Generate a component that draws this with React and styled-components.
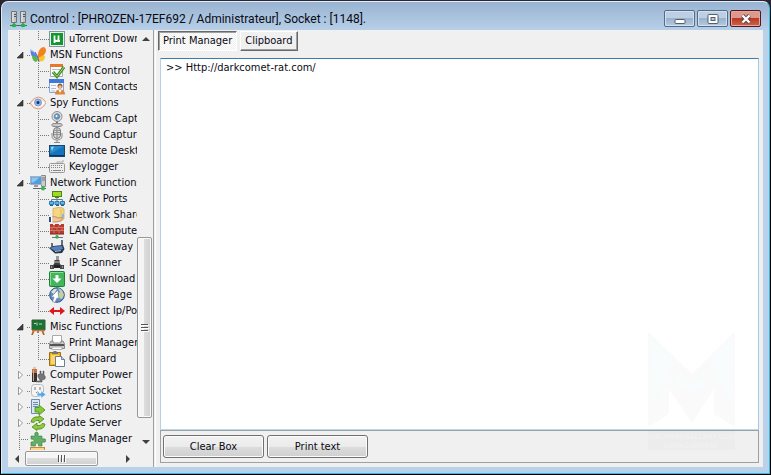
import React, { useState } from "react";
import styled, { createGlobalStyle, css } from "styled-components";

const GlobalStyle = createGlobalStyle`
  *, *::before, *::after { box-sizing: border-box; }
  body { margin: 0; background: #05060a; }
  body, button, textarea {
    font-family: "DejaVu Sans Condensed", "Noto Sans", sans-serif;
    font-size: 11px;
    line-height: 16px;
    color: #0a0a14;
  }
  button { padding: 0; cursor: default; }
  ul { list-style: none; margin: 0; padding: 0; }
  svg { display: block; }
`;

const Desktop = styled.div`
  height: 100vh;
  padding: 1px;
  background: linear-gradient(#2a2836, #000 30px);
`;

const Window = styled.main`
  position: relative;
  display: flex;
  flex-direction: column;
  height: 100%;
  padding: 0 6px 6px;
  border: 1px solid #35b9d6;
  border-top-color: #e4eef8;
  border-left-color: #dcebf8;
  border-radius: 7px 7px 0 0;
  background: linear-gradient(#99b4d1, #b9d1ea 30px, #b9d1ea);
  overflow: hidden;
`;

const TitleBar = styled.header`
  display: flex;
  align-items: center;
  flex: none;
  height: 28px;
  padding: 6px 2px 0;
  gap: 3px;
`;

const Title = styled.h1`
  flex: 1;
  margin: 0;
  font-family: Roboto, "Open Sans", sans-serif;
  font-size: 12px;
  font-weight: 400;
  line-height: 16px;
  white-space: nowrap;
`;

const WindowButtons = styled.div`
  display: flex;
  gap: 2px;
  align-self: flex-start;
  padding-top: 2px;
`;

const WindowButton = styled.button`
  display: grid;
  place-items: center;
  width: 31px;
  height: 17px;
  border: 1px solid ${(p) => (p.$close ? "#5a1420" : "#566a85")};
  border-radius: 2px;
  box-shadow: inset 0 0 0 1px ${(p) => (p.$close ? "#e5a79c" : "#d3e1f0")};
  background: ${(p) =>
    p.$close
      ? "linear-gradient(#dc9a8c 0 45%, #b93a22 50%, #d0644a)"
      : "linear-gradient(#bccfe4 0 45%, #9ab2ce 50%, #b4cae2)"};
`;

const Body = styled.div`
  display: flex;
  flex: 1;
  min-height: 0;
  background: #f0f0f0;
`;

const Sidebar = styled.nav`
  display: grid;
  grid-template: minmax(0, 1fr) 17px / minmax(0, 1fr) 16px;
  flex: none;
  width: 146px;
  border-right: 1px solid #a0a0a0;
`;

const Tree = styled.ul`
  padding-top: 1px;
  overflow: hidden;
`;

const dots = "repeating-linear-gradient(#777 0 1px, transparent 1px 2px)";
const dashes = "repeating-linear-gradient(90deg, #777 0 1px, transparent 1px 2px)";

const Row = styled.li`
  display: flex;
  align-items: center;
  height: 16px;
  white-space: nowrap;
`;

const RootCell = styled.span`
  display: flex;
  align-items: center;
  flex: none;
  width: 22px;
  height: 16px;
  padding-left: 8px;
  background-repeat: no-repeat;
  ${(p) =>
    p.$kind === "expander" &&
    css`
      background-image: ${dashes};
      background-size: 4px 1px;
      background-position: 19px 8px;
    `}
  ${(p) =>
    p.$kind === "line" &&
    css`
      background-image: ${dots};
      background-size: 1px 16px;
      background-position: 11px 0;
    `}
  ${(p) =>
    p.$kind === "leaf" &&
    css`
      background-image: ${dots}, ${dashes};
      background-size: 1px 16px, 10px 1px;
      background-position: 11px 0, 11px 8px;
    `}
`;

const ChildCell = styled.span`
  flex: none;
  width: 19px;
  height: 16px;
  background-image: ${dots}, ${dashes};
  background-repeat: no-repeat;
  background-size: 1px ${(p) => (p.$last ? "8px" : "16px")}, 11px 1px;
  background-position: 8px 0, 8px 8px;
`;

const Expander = styled.button`
  width: 8px;
  height: 10px;
  border: 0;
  background: none;
`;

const IconSlot = styled.span`
  flex: none;
  width: 16px;
  height: 16px;
  margin-right: 4px;
`;

const ScrollTrack = styled.div`
  display: flex;
  flex-direction: ${(p) => (p.$horizontal ? "row" : "column")};
  grid-column: ${(p) => (p.$horizontal ? "1 / -1" : "auto")};
  background: #f0f0f0;
`;

const ScrollArrow = styled.button`
  display: grid;
  place-items: center;
  flex: none;
  width: 17px;
  height: 17px;
  border: 0;
  background: none;
`;

const Spacer = styled.span`
  flex: ${(p) => p.$grow};
`;

const ScrollThumb = styled.button`
  display: grid;
  place-items: center;
  flex: ${(p) => p.$grow};
  margin: ${(p) => (p.$horizontal ? "1px 0" : "0 1px 0 0")};
  border: 1px solid #979797;
  border-radius: 2px;
  box-shadow: inset 0 0 0 1px #fafafa;
  background: linear-gradient(${(p) => (p.$horizontal ? "180deg" : "90deg")}, #f5f5f5 0 45%, #dcdcdc 50%, #d0d0d0);
`;

const Content = styled.section`
  display: flex;
  flex-direction: column;
  flex: 1;
  min-width: 0;
  margin-left: 1px;
  padding: 1px 4px 4px 4px;
  border-left: 1px solid #fff;
`;

const Tabs = styled.div`
  display: flex;
  gap: 3px;
  flex: none;
  margin: 0 0 7px -2px;
`;

const Tab = styled.button`
  height: 20px;
  padding: 0 4px;
  border: 1px solid;
  ${(p) =>
    p.$active
      ? css`
          border-color: #696969 #fff #fff #696969;
          box-shadow: inset 1px 1px #a0a0a0;
          background: repeating-conic-gradient(#f0f0f0 0 25%, #fff 0 50%) 0 0 / 2px 2px;
        `
      : css`
          border-color: #fff #696969 #696969 #fff;
          box-shadow: inset -1px -1px #a0a0a0;
          background: #f0f0f0;
        `}
`;

const TextBox = styled.textarea`
  display: block;
  flex: 1;
  min-height: 0;
  width: 100%;
  margin: 0;
  padding: 1px 5px;
  border: 1px solid;
  border-color: #3d7bad #a4c9e3 #b7d9ed #b5cfe7;
  border-radius: 1px;
  outline: none;
  resize: none;
  background: #fff;
`;

const ActionBar = styled.div`
  display: flex;
  gap: 3px;
  flex: none;
  padding: 4px 2px;
  border: 1px solid #a0a0a0;
`;

const ActionButton = styled.button`
  width: 101px;
  height: 23px;
  border: 1px solid #707070;
  border-radius: 3px;
  box-shadow: inset 0 0 0 1px #fcfcfc;
  background: linear-gradient(#f2f2f2, #ebebeb 50%, #dddddd 50%, #cfcfcf);
`;

const Watermark = styled.div`
  position: absolute;
  right: 34px;
  bottom: 23px;
  width: 87px;
  pointer-events: none;
`;

const WatermarkText = styled.div`
  padding-top: 1px;
  margin-top: 2px;
  background: #ececec;
  color: #f1f1f1;
  font-family: "Liberation Sans", sans-serif;
  font-size: 7px;
  font-weight: 700;
  line-height: 9px;
  text-align: center;
  white-space: nowrap;
`;

const Svg = ({ children, w = 16, h = 16 }) => (
  <svg width={w} height={h} viewBox={`0 0 ${w} ${h}`} aria-hidden="true">
    {children}
  </svg>
);

const icons = {
  utorrent: (
    <>
      <rect x=".5" y=".5" width="15" height="15" fill="#e8f0ea" stroke="#8793a0" />
      <rect x="2" y="2" width="12" height="12" fill="#12962f" />
      <path d="M5.5 12V4.500M5.500 8.500q.3 1.500 2 1.500t2-1.500V4.500V9q0 1 1.500 1" stroke="#fff" strokeWidth="1.800" fill="none" />
    </>
  ),
  msn: (
    <>
      <path d="M7 10Q5 3 0 2q-.5 3 1.500 5Z" fill="#a9c7ee" />
      <path d="M8 11Q4 4 1 4q-1 4 2 6Z" fill="#5b7fe0" />
      <path d="M8 12Q5 8 2 9q0 5 4 6 2-1 2-3Z" fill="#57b947" />
      <path d="M8 12Q7 2 13 0q3 0 3 4-1 5-7 7Z" fill="#f58220" />
      <path d="M8 12q4-5 7-3 0 5-4 5.500-2 0-3-2.500Z" fill="#f9c62e" />
      <path d="M5 5q3 4 4 10" stroke="#5b4fa5" fill="none" />
    </>
  ),
  control: (
    <>
      <path d="M1.500 1.500h12v12h-12z" fill="#fff" stroke="#a9a9a9" />
      <path d="M1 1h13v3H1z" fill="#e8772e" />
      <path d="M3 6.500h8M3 9.500h3" stroke="#bbb" />
      <path d="m4 9 4 4.500L15 4" stroke="#3c8c26" strokeWidth="3" fill="none" />
      <path d="m4 9 4 4.500L15 4" stroke="#a2dc7e" strokeWidth="1" fill="none" />
    </>
  ),
  contacts: (
    <>
      <path d="M.5.5h14v13H.5z" fill="#f6f9ff" stroke="#86a5dc" />
      <path d="M0 0h15v4H0z" fill="#3e79dc" />
      <path d="M2 6.500h5M2 9.500h5M2 12h4" stroke="#b5bfd3" />
      <circle cx="11" cy="7" r="2.500" fill="#9a5a2c" />
      <circle cx="11" cy="8" r="1.700" fill="#f0bd90" />
      <path d="M6 15.500q0-5 5-5t5 5Z" fill="#df8639" />
      <path d="m9.500 11 1.500 3 1.500-3Z" fill="#fff" />
    </>
  ),
  eye: (
    <>
      <path d="M0 8q4-6 8.500-6T16 7.500Q13 14 8 14T0 8Z" fill="#f7e4d8" stroke="#d5a184" />
      <path d="M2 8q3-4 6-4t6.500 4Q12 12 8 12T2 8Z" fill="#fff" />
      <circle cx="8" cy="7.500" r="3.500" fill="#8fb2ea" stroke="#7b9bd5" />
      <circle cx="8" cy="7.500" r="1.500" fill="#1c3160" />
    </>
  ),
  webcam: (
    <>
      <path d="M7 10h2v4H7z" fill="#777" />
      <ellipse cx="8" cy="14" rx="5.500" ry="1.700" fill="#ccc" stroke="#858585" />
      <circle cx="8" cy="5.500" r="5" fill="#ddd" stroke="#8e8e8e" />
      <circle cx="8" cy="5.500" r="2.700" fill="#5b9fda" stroke="#6d8299" />
      <circle cx="7.500" cy="5" r="1" fill="#fff" />
    </>
  ),
  mic: (
    <>
      <rect x="4.500" y=".5" width="7" height="11" rx="3.500" fill="#d8d8d8" stroke="#777" />
      <path d="M5 3.500h6M5 5.500h6M5 7.500h6" stroke="#999" />
      <path d="M8 1v10" stroke="#888" />
      <path d="M3 6v3q0 4 5 4t5-4V6M8 13v2M5 15.500h6" stroke="#8a8a8a" fill="none" />
    </>
  ),
  desktop: (
    <>
      <rect x=".5" y="2.500" width="15" height="11" fill="#1473bf" stroke="#174771" />
      <path d="M1 3h14L3 10H1Z" fill="#2a8ccd" />
      <path d="M1 12.500h14" stroke="#0b365d" />
      <path d="m2 4 3-.5L3 8Z" fill="#9addf4" />
    </>
  ),
  keyboard: (
    <>
      <path d="M8 5V3h6V1" stroke="#aaa" fill="none" />
      <rect x=".5" y="4.500" width="15" height="9" rx="1" fill="#eee" stroke="#999" />
      <path d="M2 6.500h12M2 8.500h12" stroke="#888" strokeDasharray="1 1" />
      <path d="M2 11.500h1M4 11.500h8M13 11.500h1" stroke="#888" />
    </>
  ),
  network: (
    <>
      <path d="M11.500.5h4v11h-4z" fill="#ccc" stroke="#888" />
      <path d="M12 3h3M12 5h3" stroke="#777" />
      <rect x=".5" y="1.500" width="11" height="8" fill="#4f9ce0" stroke="#a5b2bd" />
      <path d="M1.500 2.500h8l-6 5h-2Z" fill="#8dc6f2" />
      <path d="M4 10h4v2H4z" fill="#999" />
      <path d="M3 13.500h13" stroke="#5b6770" />
      <circle cx="13" cy="13.500" r="2" fill="#2eb94b" />
    </>
  ),
  ports: (
    <>
      <path d="M8 6v3M2.500 11V8.500h11V11M8 8v3" stroke="#697b89" fill="none" />
      <rect x="3.500" y=".5" width="9" height="5" fill="#9fdc1f" stroke="#4e8516" />
      <path d="M6 6.500h4" stroke="#4e8516" />
      <path d="M.5 10.500h4v3h-4zM6 10.500h4v3H6zM11.500 10.500h4v3h-4z" fill="#5bb8ee" stroke="#257bb5" />
      <path d="M1 14.500h3M7 14.500h3M12 14.500h3" stroke="#456" />
    </>
  ),
  share: (
    <>
      <path d="M4 1.500 12 0l3 2v10l-3 2H4Z" fill="#f5d683" stroke="#cda653" strokeWidth=".7" />
      <path d="M12 1.500V13" stroke="#deb968" />
      <path d="M13 7h2v3h-2z" fill="#7dbbe7" />
      <path d="M3 10q4-1 6 1l5-.5q-1 4-6 4.500H3Z" fill="#f1c69d" stroke="#a97855" strokeWidth=".7" />
      <path d="M0 10h2v5H0z" fill="#2c4a7c" />
      <path d="M2 10h1.500v5H2z" fill="#fff" />
    </>
  ),
  firewall: (
    <>
      <path d="M1 1h3v1h2V1h4v1h2V1h3v10H1z" fill="#b83c2e" />
      <path d="M1 4.500h14M1 7.500h14M5 2v2.500M10 2v2.500M3 5v2.500M8 5v2.500M13 5v2.500M5 8v3M10 8v3" stroke="#dd8a7c" strokeWidth=".7" />
      <path d="M1 11h14" stroke="#742019" />
      <path d="M3 14.500h11M8 12v2" stroke="#6b7472" />
      <circle cx="8" cy="14" r="1.800" fill="#2cb54a" />
    </>
  ),
  gateway: (
    <>
      <path d="M3 8V4M13 8V1" stroke="#34465c" strokeWidth="1.500" />
      <path d="m0 9 4-2 10-1 1.500 4-2.500 4-7 .5Z" fill="#273547" />
      <path d="m1 9 4-1.500 8-.5 1 3-8 2Z" fill="#5582bd" />
      <path d="m6 12.500 6-1" stroke="#a8c7eb" />
    </>
  ),
  scanner: (
    <>
      <path d="M7 1h3v4H7z" fill="#999" />
      <path d="M5.500 5h5v3l2 3h-9l2-3Z" fill="#3d3d3d" />
      <path d="M6 6h4v2H6z" fill="#858585" />
      <path d="M1 10h4v4H1zM11 10h4v4h-4z" fill="#4a4a4a" />
      <path d="M5 10h6v3H5z" fill="#222" />
      <path d="M2 11h1v2H2zM13 11h1v2h-1z" fill="#999" />
    </>
  ),
  download: (
    <>
      <rect x=".5" y=".5" width="15" height="15" rx="1" fill="#41b75a" stroke="#237d39" />
      <path d="M1.500 14V1.500H14" stroke="#8cdb99" fill="none" />
      <path d="M6.500 4h3v3.500h3L8 12 3.500 7.500h3Z" fill="#fff" />
    </>
  ),
  browse: (
    <>
      <circle cx="8" cy="8" r="7.300" fill="#5c8fd0" stroke="#31548e" />
      <path d="m9 1 4 2 2 5-2 4-3-1-1-4 2-2Z" fill="#c3cfa0" />
      <path d="M2 5q3-4 6-3L5 7Z" fill="#dbe7c9" />
      <path d="m9 3 1 9-2-1-2 4.500-2.500-1L5 10H2Z" fill="#fff" stroke="#71839b" strokeWidth=".7" />
    </>
  ),
  redirect: (
    <path d="m0 8 5-4v3H7v2H5v3ZM16 8l-5-4v3H9v2h2v3ZM7 7h2v2H7Z" fill="#df1820" />
  ),
  misc: (
    <>
      <path d="m4 11-2 5M12 11l2 5M8 11v3" stroke="#aa6530" strokeWidth="1.700" />
      <path d="M2 1h13v10H2z" fill="#197335" stroke="#3d5835" />
      <path d="M4 4.500h2M7 3.500v3M9 5h3" stroke="#b9dfb9" />
      <path d="M2 11.500h13" stroke="#bc7b3c" strokeWidth="1.500" />
    </>
  ),
  print: (
    <>
      <path d="M3.500.5h9v8h-9z" fill="#fff" stroke="#aaa" />
      <path d="m2 6-1.500 3v4.500h15V9L14 6h-2v2H4V6Z" fill="#ccc" stroke="#888" />
      <path d="M1 9h14v2H1z" fill="#555" />
      <path d="M3 12h10v2.500H3z" fill="#fafafa" stroke="#999" strokeWidth=".7" />
    </>
  ),
  clipboard: (
    <>
      <path d="M.5 1.500h11v13H.5z" fill="#edb52c" stroke="#9e6c12" />
      <path d="M2 4h8v9H2z" fill="#f7d768" />
      <path d="M3 3h6V1.500H7.500V0h-3v1.500H3Z" fill="#777" />
      <path d="M6.500 5.500h6l3 3v7h-9z" fill="#fff" stroke="#697e99" />
      <path d="M12.500 5.500v3h3" fill="#cbdaf0" stroke="#697e99" />
    </>
  ),
  power: (
    <>
      <path d="M2 2h5v13H2z" fill="#333" />
      <path d="M2 2h5v4H2z" fill="#c8713d" />
      <path d="M3 0h3v2H3z" fill="#b58" fillOpacity=".3" />
      <path d="M3 3h1v11H3z" fill="#d9a98d" />
      <path d="M8 10q-1-3 2-3V4h1v3h2V4h1v4q2 1 1 4l-3 1v2H6v-1h4v-1Z" fill="#777" stroke="#444" strokeWidth=".5" />
    </>
  ),
  socket: (
    <>
      <rect x="1.500" y="1.500" width="12" height="12" rx="3" fill="#f5f5f5" stroke="#b9b9b9" />
      <path d="M5 4v3M10 4v3M6 10q1.500-2 3 0" stroke="#777" fill="none" />
      <path d="M7 10h4V7.500l5 4-5 4V13H7Z" fill="#58a8e3" stroke="#fff" strokeWidth=".6" />
    </>
  ),
  server: (
    <>
      <path d="M1.500.5h8v14h-8z" fill="#dbe7f4" stroke="#6a8bb3" />
      <path d="M3 3.500h5M3 5.500h5M3 7.500h5" stroke="#6a8bb3" />
      <path d="M5 8.500h4V6l6 5-6 5v-3H5Z" fill="#83cc35" stroke="#4a8517" strokeWidth=".8" />
    </>
  ),
  update: (
    <>
      <path d="M1 7q1-6 8-5V.5l5 3.500-5 4V5.500q-4-1-5 2Z" fill="#8ecb3b" stroke="#4c851c" strokeWidth=".8" />
      <path d="M15 9q-1 6-8 5v1.500L2 12l5-4v2.500q4 1 5-2Z" fill="#8ecb3b" stroke="#4c851c" strokeWidth=".8" />
    </>
  ),
  plugins: (
    <path d="M1 5h4q-1-4 1.500-4T8 5h4v3q4-1 4 1.500T12 11v4H8.500q.5-3-1.500-3t-1.500 3H1v-4q3 0 3-1.500T1 8Z" fill="#62ad67" stroke="#3c8042" strokeWidth=".6" />
  ),
  last: <rect x=".5" y=".5" width="14" height="14" fill="#fbd78c" stroke="#c88a2c" />,
};

const groups = [
  { children: [["utorrent", "uTorrent Down"]] },
  { icon: "msn", label: "MSN Functions", children: [["control", "MSN Control"], ["contacts", "MSN Contacts"]] },
  {
    icon: "eye",
    label: "Spy Functions",
    children: [["webcam", "Webcam Captu"], ["mic", "Sound Capture"], ["desktop", "Remote Deskt"], ["keyboard", "Keylogger"]],
  },
  {
    icon: "network",
    label: "Network Functions",
    children: [
      ["ports", "Active Ports"],
      ["share", "Network Share"],
      ["firewall", "LAN Computer"],
      ["gateway", "Net Gateway"],
      ["scanner", "IP Scanner"],
      ["download", "Url Download"],
      ["browse", "Browse Page"],
      ["redirect", "Redirect Ip/Po"],
    ],
  },
  { icon: "misc", label: "Misc Functions", children: [["print", "Print Manager"], ["clipboard", "Clipboard"]] },
  { icon: "power", label: "Computer Power", closed: true },
  { icon: "socket", label: "Restart Socket", closed: true },
  { icon: "server", label: "Server Actions", closed: true },
  { icon: "update", label: "Update Server", closed: true },
  { icon: "plugins", label: "Plugins Manager" },
  { icon: "last", label: "" },
];

const Icon = ({ name }) => (
  <IconSlot>
    <Svg>{icons[name]}</Svg>
  </IconSlot>
);

const TreeGroup = ({ group }) => {
  const { icon, label, children = [], closed } = group;
  const expandable = closed || children.length > 0;
  return (
    <>
      {icon && (
        <Row>
          <RootCell $kind={expandable ? "expander" : "leaf"}>
            {expandable && (
              <Expander aria-label={`Toggle ${label}`} aria-expanded={!closed}>
                <Svg w={8} h={10}>
                  {closed ? (
                    <path d="M2.500 1 6.500 5l-4 4Z" fill="#fff" stroke="#999" />
                  ) : (
                    <path d="M7 2v6H1Z" fill="#404040" stroke="#222" strokeWidth=".6" />
                  )}
                </Svg>
              </Expander>
            )}
          </RootCell>
          <Icon name={icon} />
          {label}
        </Row>
      )}
      {children.map(([name, text], i) => (
        <Row key={text}>
          <RootCell $kind="line" />
          <ChildCell $last={i === children.length - 1} />
          <Icon name={name} />
          {text}
        </Row>
      ))}
    </>
  );
};

const Arrow = ({ d, label }) => (
  <ScrollArrow aria-label={label}>
    <Svg w={8} h={8}>
      <path d={d} fill="#404040" />
    </Svg>
  </ScrollArrow>
);

export default function App() {
  const [text, setText] = useState(">> Http://darkcomet-rat.com/");
  const [tab, setTab] = useState("Print Manager");
  return (
    <Desktop>
      <GlobalStyle />
      <Window>
        <TitleBar>
          <Svg w={17} h={17}>
            <path d="M1.500.5h5v11h-5zM10.500.5h5v11h-5z" fill="#bfc3c4" stroke="#707578" />
            <path d="M3 1v10M12 1v10" stroke="#eee" />
            <path d="M4 3.500h2M4 5.500h2M13 3.500h2M13 5.500h2" stroke="#555" />
            <path d="M0 14.500h17" stroke="#47665b" />
            <path d="M4 12v2M13 12v2" stroke="#555" />
            <ellipse cx="4" cy="14.500" rx="2.500" ry="1.700" fill="#21b348" />
            <ellipse cx="13" cy="14.500" rx="2.500" ry="1.700" fill="#21b348" />
          </Svg>
          <Title>Control : [PHROZEN-17EF692 / Administrateur], Socket : [1148].</Title>
          <WindowButtons>
            <WindowButton aria-label="Minimize">
              <Svg w={12} h={10}>
                <rect x="1" y="5.500" width="10" height="4" rx="1" fill="#fff" stroke="#555e6b" />
              </Svg>
            </WindowButton>
            <WindowButton aria-label="Maximize">
              <Svg w={12} h={10}>
                <rect x="1" y=".5" width="10" height="9" rx="1" fill="#fff" stroke="#555e6b" />
                <rect x="4" y="3.500" width="4" height="3" fill="#b4cae2" stroke="#555e6b" />
              </Svg>
            </WindowButton>
            <WindowButton aria-label="Close" $close>
              <Svg w={12} h={10}>
                <path d="m2.500 1.500 7 7m0-7-7 7" stroke="#554450" strokeWidth="4" />
                <path d="m2.500 1.500 7 7m0-7-7 7" stroke="#fff" strokeWidth="2.400" />
              </Svg>
            </WindowButton>
          </WindowButtons>
        </TitleBar>
        <Body>
          <Sidebar aria-label="Functions">
            <Tree>
              {groups.map((g, i) => (
                <TreeGroup key={i} group={g} />
              ))}
            </Tree>
            <ScrollTrack>
              <Arrow label="Scroll up" d="M0 6l4-4 4 4Z" />
              <Spacer $grow={191} />
              <ScrollThumb $grow={180} aria-label="Vertical scroll position">
                <Svg w={8} h={9}>
                  <path d="M0 1.500h7M0 4.500h7M0 7.500h7" stroke="#555" />
                  <path d="M1 2.500h7M1 5.500h7M1 8.500h7" stroke="#fff" />
                </Svg>
              </ScrollThumb>
              <Spacer $grow={15} />
              <Arrow label="Scroll down" d="M0 2l4 4 4-4Z" />
            </ScrollTrack>
            <ScrollTrack $horizontal>
              <Arrow label="Scroll left" d="M6 0L2 4l4 4Z" />
              <ScrollThumb $horizontal $grow={72} aria-label="Horizontal scroll position">
                <Svg w={9} h={8}>
                  <path d="M1.500 0v7M4.500 0v7M7.500 0v7" stroke="#555" />
                  <path d="M2.500 1v7M5.500 1v7M8.500 1v7" stroke="#fff" />
                </Svg>
              </ScrollThumb>
              <Spacer $grow={22} />
              <Arrow label="Scroll right" d="M2 0l4 4-4 4Z" />
              <Spacer $grow={17} />
            </ScrollTrack>
          </Sidebar>
          <Content>
            <Tabs role="tablist">
              {["Print Manager", "Clipboard"].map((name) => (
                <Tab key={name} role="tab" aria-selected={tab === name} $active={tab === name} onClick={() => setTab(name)}>
                  {name}
                </Tab>
              ))}
            </Tabs>
            <TextBox aria-label="Text to print" spellCheck={false} value={text} onChange={(e) => setText(e.target.value)} />
            <ActionBar>
              <ActionButton onClick={() => setText("")}>Clear Box</ActionButton>
              <ActionButton>Print text</ActionButton>
            </ActionBar>
          </Content>
        </Body>
        <Watermark>
          <svg width="87" height="97" viewBox="0 0 87 97" aria-hidden="true">
            <path d="M0 0 44 42 87 0V95L66 82V57L44 91 21 57V82L0 95Z" fill="#fafafa" />
            <path d="M3 5 25 24 20 45 4 70ZM84 5 62 24 68 45 83 70ZM28 40l16 12 14-12-2 14-12 6-14-6Z" fill="#f8fcfd" />
          </svg>
          <WatermarkText>
            MALWAREGALLERY.COM
            <br />
            DARKCODERSC
          </WatermarkText>
        </Watermark>
      </Window>
    </Desktop>
  );
}
